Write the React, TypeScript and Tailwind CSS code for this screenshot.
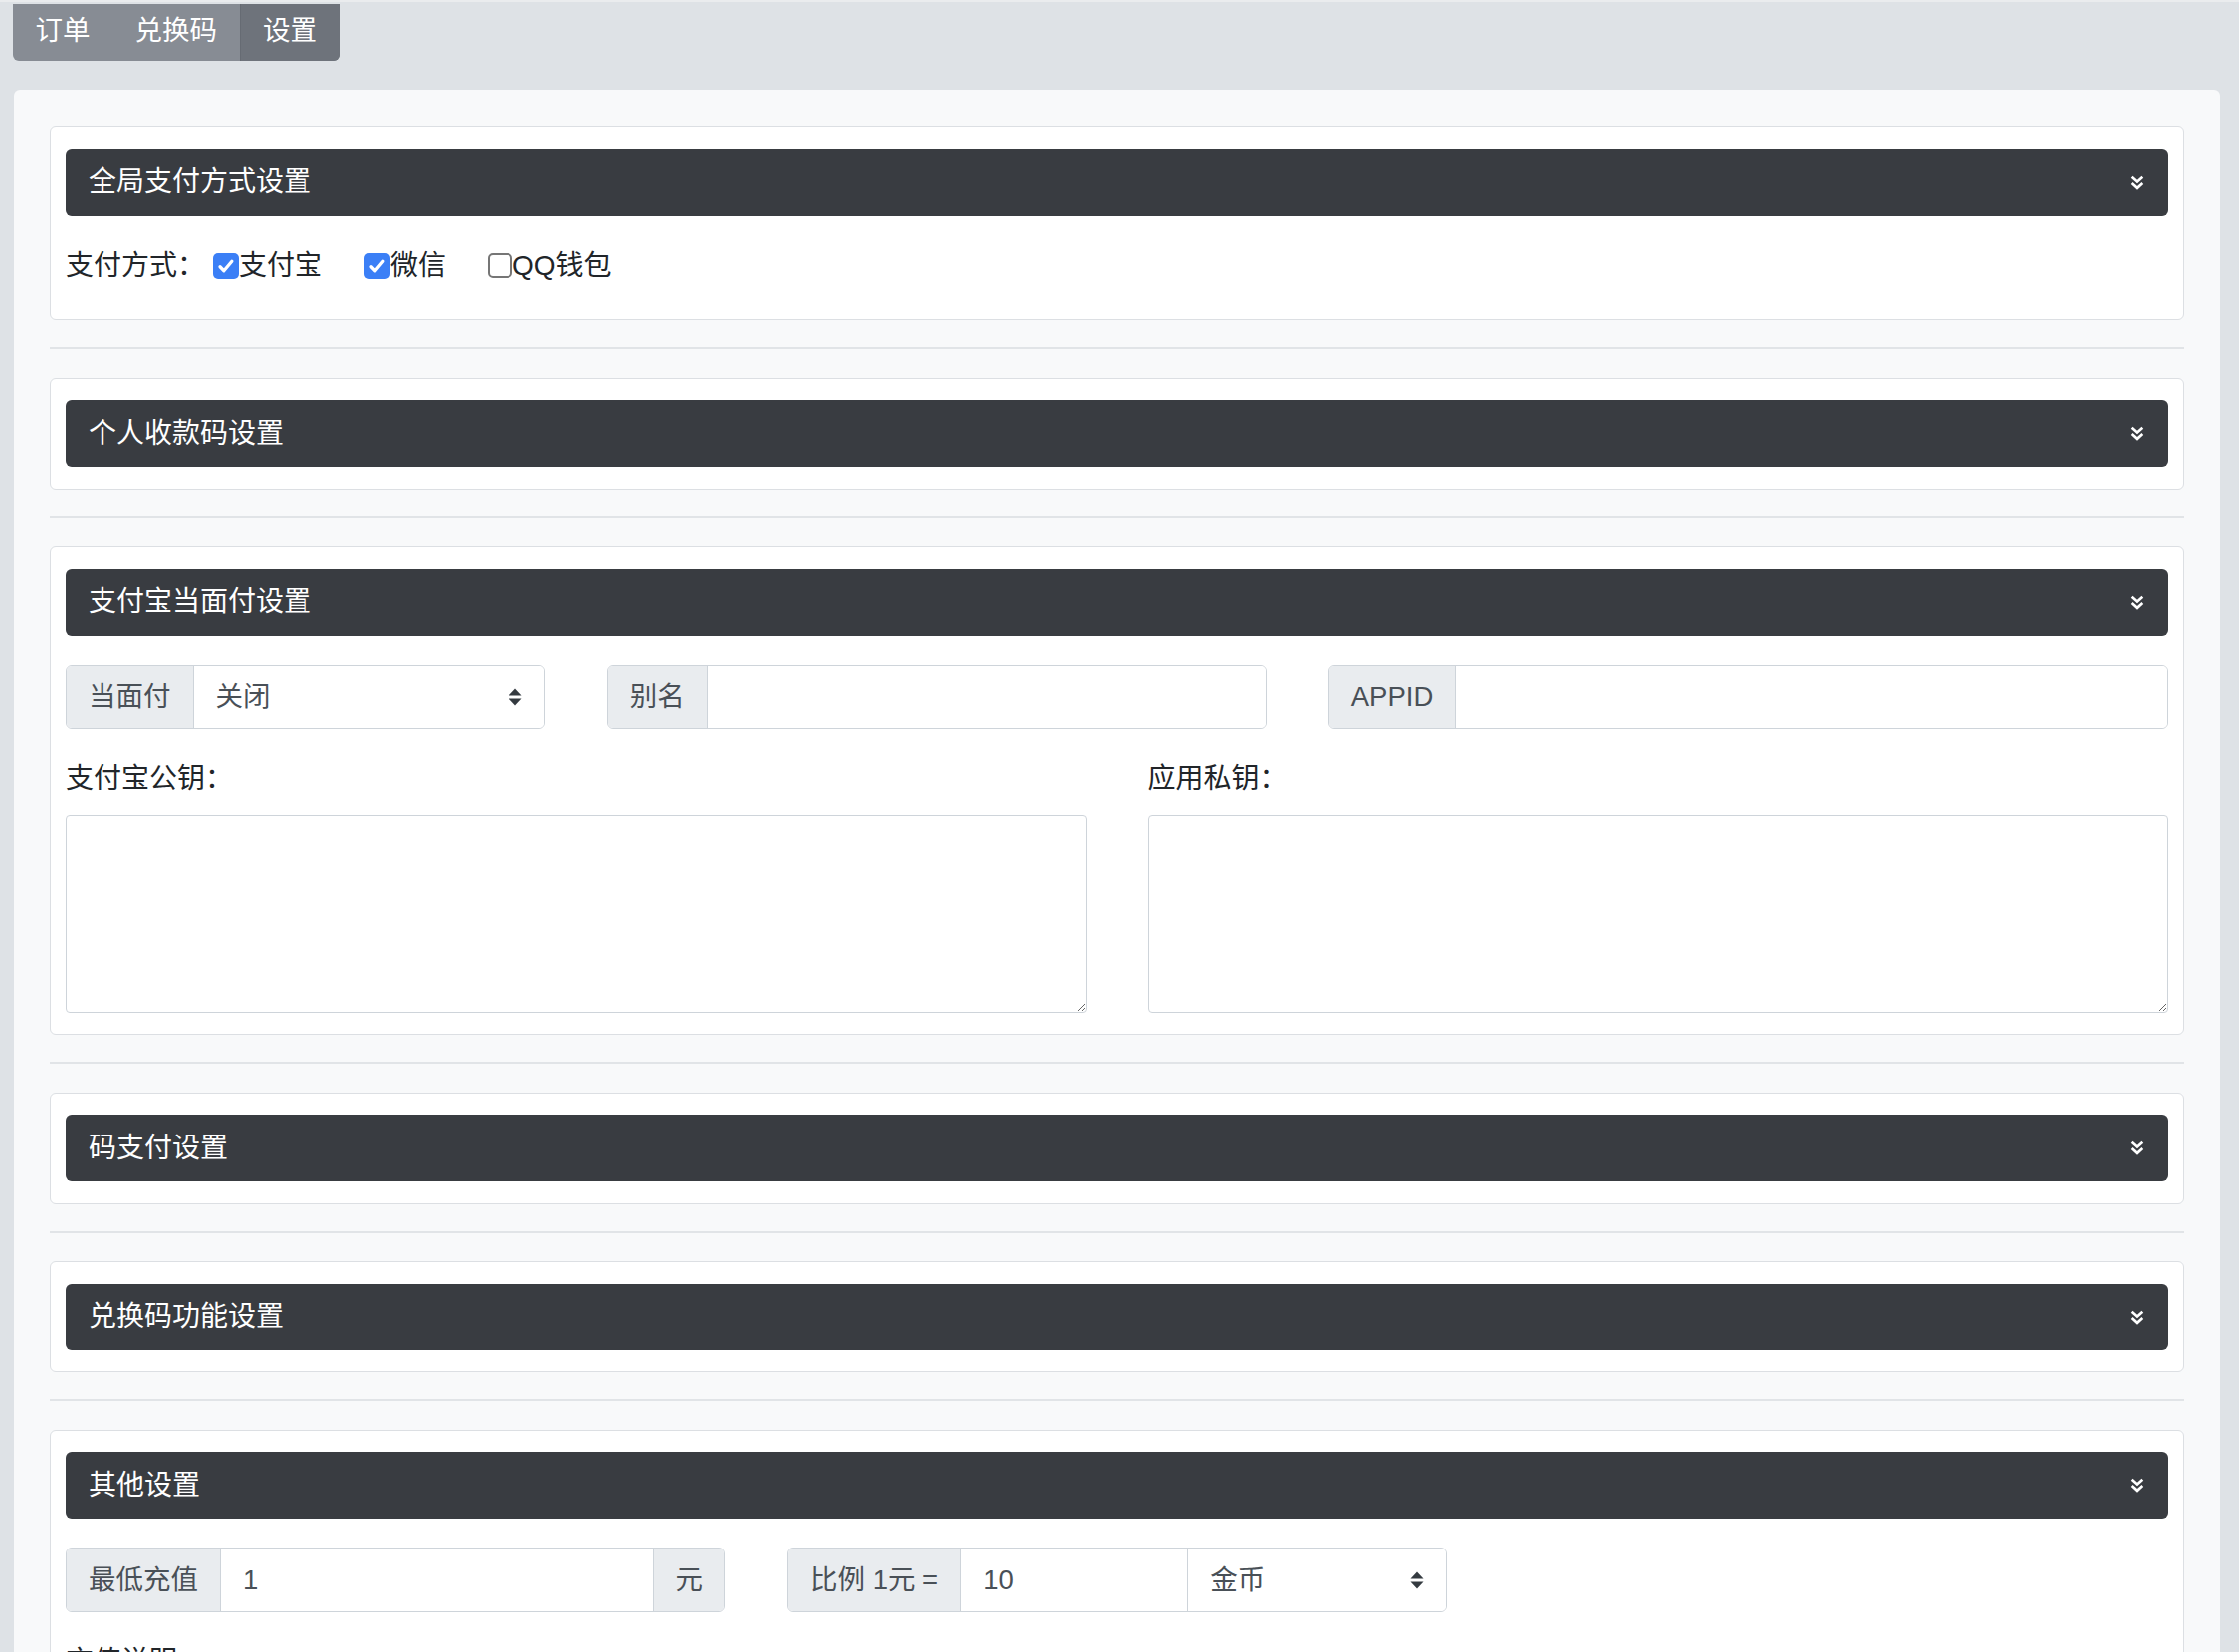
import clsx from "clsx";

const tabs = [
  { label: "订单", active: false },
  { label: "兑换码", active: false },
  { label: "设置", active: true },
];

function ChevronsDown() {
  return (
    <svg viewBox="0 0 16 16" className="h-[17px] w-[17px]" fill="none">
      <polyline points="2.5,2.5 8,7.5 13.5,2.5" stroke="white" strokeWidth="2.5" />
      <polyline points="2.5,8.5 8,13.5 13.5,8.5" stroke="white" strokeWidth="2.5" />
    </svg>
  );
}

function SelectArrow() {
  return (
    <svg viewBox="0 0 16 20" className="h-[20px] w-[16px]">
      <polygon points="1.5,8.5 8,1.5 14.5,8.5" fill="#343a40" />
      <polygon points="1.5,11.5 14.5,11.5 8,18.5" fill="#343a40" />
    </svg>
  );
}

function Check({ checked }: { checked: boolean }) {
  if (checked) {
    return (
      <span className="flex h-[26px] w-[26px] shrink-0 items-center justify-center rounded-[5px] bg-[#3b7ff6]">
        <svg viewBox="0 0 16 16" className="h-[20px] w-[20px]" fill="none">
          <path
            d="M3.2 8.6l3.1 3.2 6.4-7.6"
            stroke="white"
            strokeWidth="2.6"
            strokeLinecap="round"
            strokeLinejoin="round"
          />
        </svg>
      </span>
    );
  }
  return (
    <span className="h-[25px] w-[25px] shrink-0 rounded-[5px] border-2 border-[#767676] bg-white" />
  );
}

function Card({ title, children }: { title: string; children?: React.ReactNode }) {
  return (
    <div className="rounded-[6px] border border-[#dcdfe3] bg-white px-[15px] py-[21.5px]">
      <div className="flex h-[67px] items-center justify-between rounded-[6px] bg-[#393c41] px-[23px] text-[28px] text-white">
        <span>{title}</span>
        <ChevronsDown />
      </div>
      {children && <div className="mt-[29px]">{children}</div>}
    </div>
  );
}

function Divider() {
  return <div className="mb-[28.5px] mt-[27px] h-[2px] bg-[#e1e4e7]" />;
}

function Group({ children, className }: { children: React.ReactNode; className?: string }) {
  return (
    <div
      className={clsx(
        "flex h-[65px] overflow-hidden rounded-[6px] border-[1.5px] border-[#ced4da] text-[27.5px] text-[#495057]",
        className
      )}
    >
      {children}
    </div>
  );
}

function Addon({ children, left }: { children: React.ReactNode; left?: boolean }) {
  return (
    <div
      className={clsx(
        "flex shrink-0 items-center border-[#ced4da] bg-[#e9ecef] px-[22px] whitespace-pre",
        left ? "border-l-[1.5px]" : "border-r-[1.5px]"
      )}
    >
      {children}
    </div>
  );
}

function Field({ value, className }: { value?: string; className?: string }) {
  return (
    <div className={clsx("flex min-w-0 items-center bg-white px-[22px]", className)}>
      {value}
    </div>
  );
}

function Select({ value, className }: { value: string; className?: string }) {
  return (
    <div className={clsx("flex min-w-0 items-center justify-between bg-white pl-[22px] pr-[21px]", className)}>
      <span>{value}</span>
      <SelectArrow />
    </div>
  );
}

function TextBox({ label }: { label: string }) {
  return (
    <div className="flex flex-col">
      <div className="mt-[29px] text-[28px] leading-[42px] text-[#212529]">{label}</div>
      <textarea
        readOnly
        className="mt-[15px] block h-[199px] w-full rounded-[4px] border-[1.5px] border-[#ced4da] bg-white"
      />
    </div>
  );
}

export default function App() {
  return (
    <div className="min-h-screen bg-[#dee2e6] font-['Liberation_Sans','Noto_Sans_CJK_SC',sans-serif]">
      <div className="h-[2px] bg-[#eaecee]" />
      <div className="ml-[13px] mt-[2px] flex h-[57px] w-fit overflow-hidden rounded-b-[6px] bg-[#878c94]">
        {tabs.map((t) => (
          <div
            key={t.label}
            className={clsx(
              "flex items-center px-[22.5px] pb-[4px] text-[27.5px] text-white",
              t.active && "border-l border-[#666b73] bg-[#6e737b]"
            )}
          >
            {t.label}
          </div>
        ))}
      </div>

      <div className="ml-[14px] mt-[29px] w-[2217px] rounded-[6px] bg-[#f8f9fa] px-[36px] pb-[40px] pt-[37px]">
        <Card title="全局支付方式设置">
          <div className="mb-[12px] flex h-[42px] items-center text-[28px] text-[#212529]">
            <span className="mr-[8px]">支付方式：</span>
            <Check checked />
            <span className="mr-[42px]">支付宝</span>
            <Check checked />
            <span className="mr-[42px]">微信</span>
            <Check checked={false} />
            <span>QQ钱包</span>
          </div>
        </Card>
        <Divider />

        <Card title="个人收款码设置" />
        <Divider />

        <Card title="支付宝当面付设置">
          <div className="grid grid-cols-12 gap-x-[62px]">
            <Group className="col-span-3">
              <Addon>当面付</Addon>
              <Select value="关闭" className="flex-1" />
            </Group>
            <Group className="col-span-4">
              <Addon>别名</Addon>
              <Field className="flex-1" />
            </Group>
            <Group className="col-span-5">
              <Addon>APPID</Addon>
              <Field className="flex-1" />
            </Group>
          </div>
          <div className="grid grid-cols-2 gap-x-[62px]">
            <TextBox label="支付宝公钥：" />
            <TextBox label="应用私钥：" />
          </div>
        </Card>
        <Divider />

        <Card title="码支付设置" />
        <Divider />

        <Card title="兑换码功能设置" />
        <Divider />

        <Card title="其他设置">
          <div className="grid grid-cols-12 gap-x-[62px]">
            <Group className="col-span-4">
              <Addon>最低充值</Addon>
              <Field value="1" className="flex-1" />
              <Addon left>元</Addon>
            </Group>
            <Group className="col-span-4">
              <Addon>比例 1元 =</Addon>
              <Field value="10" className="w-[228px] shrink-0 border-r-[1.5px] border-[#ced4da]" />
              <Select value="金币" className="flex-1" />
            </Group>
          </div>
          <TextBox label="充值说明" />
        </Card>
      </div>
    </div>
  );
}
